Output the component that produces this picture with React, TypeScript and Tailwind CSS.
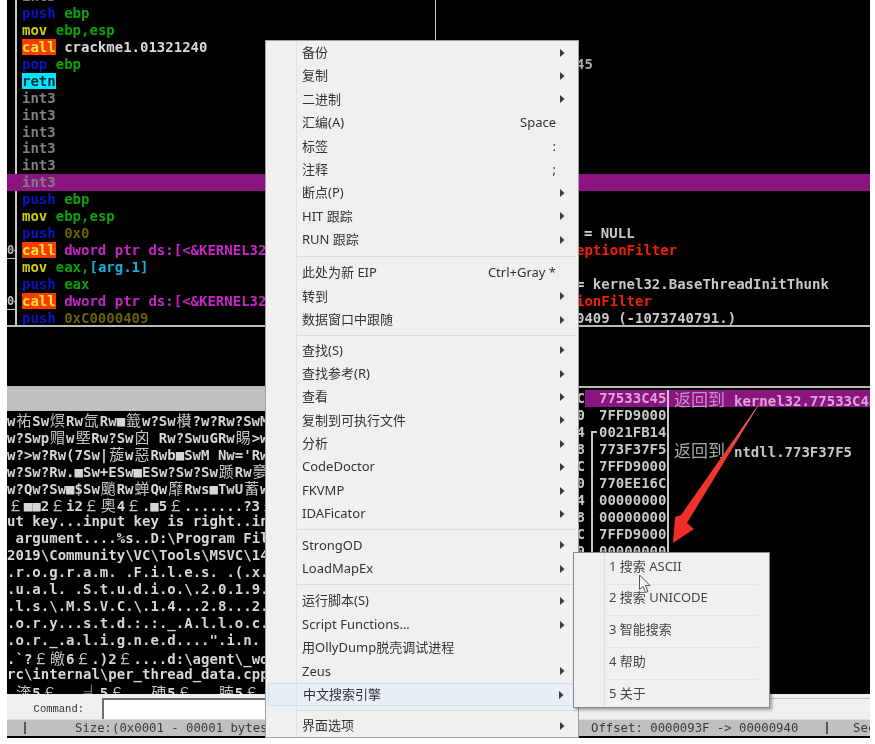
import React from "react";

const mono = "font-['DejaVu_Sans_Mono','Noto_Sans_CJK_SC',monospace]";

function Dump({ text }: { text: string }) {
  const parts = Array.from(text);
  return (
    <div className="h-[17px] leading-[17px] whitespace-pre text-[14px] font-bold text-[#d6d6d6]">
      {parts.map((c, i) =>
        /[\u2500-\u257f\u3000-\u9fff\uff00-\uffef]/.test(c) ? (
          <span key={i} className="inline-block w-[16.86px] text-center text-[15px] font-normal text-[#c4c4c4] font-['Noto_Sans_CJK_SC',sans-serif]">{c}</span>
        ) : (
          <span key={i}>{c}</span>
        )
      )}
    </div>
  );
}

const dumpRows = [
  "w祐Sw熐Rw氙Rw■籖w?Sw櫕?w?Rw?SwM",
  "w?Swp赗w塈Rw?Sw囟 Rw?SwuGRw睗>w`",
  "w?>w?Rw(7Sw|蔙w惡Rwb■SwM Nw='Rw",
  "w?Sw?Rw.■Sw+ESw■ESw?Sw?Sw踬Rw夣",
  "w?Qw?Sw■$Sw颵Rw蝉Qw靡Rws■TwU蓄w",
  "￡■■2￡i2￡奧4￡.■5￡.......?3￡?5￡",
  "ut key...input key is right..in",
  " argument....%s..D:\\Program Fil",
  "2019\\Community\\VC\\Tools\\MSVC\\14",
  ".r.o.g.r.a.m. .F.i.l.e.s. .(.x.",
  ".u.a.l. .S.t.u.d.i.o.\\.2.0.1.9.",
  ".l.s.\\.M.S.V.C.\\.1.4...2.8...2.",
  ".o.r.y...s.t.d.:.:._.A.l.l.o.c.",
  ".o.r._.a.l.i.g.n.e.d....\".i.n.",
  ".`?￡皦6￡.)2￡....d:\\agent\\_work\\",
  "rc\\internal\\per_thread_data.cpp",
  ".渀5￡...╡5￡...硨5￡...腩5￡...",
];

function Op({ k, children }: { k: string; children: React.ReactNode }) {
  if (k === "push") return <span className="text-[#0a12c4]">{children}</span>;
  if (k === "mov") return <span className="text-[#cccc10]">{children}</span>;
  if (k === "call") return <span className="bg-[#ff3a00] text-[#ffe830]">{children}</span>;
  if (k === "retn") return <span className="bg-[#00e4ff] text-[#022a34]">{children}</span>;
  return <span className="text-[#808080]">{children}</span>;
}

const G = ({ children }: { children: React.ReactNode }) => <span className="text-[#0ba30b]">{children}</span>;
const O = ({ children }: { children: React.ReactNode }) => <span className="text-[#6c6000]">{children}</span>;
const M = ({ children }: { children: React.ReactNode }) => <span className="text-[#c625c6]">{children}</span>;
const W = ({ children }: { children: React.ReactNode }) => <span className="text-[#d8d8d8]">{children}</span>;

function CodeRow({
  children,
  comment,
  mark,
  hl,
  tight,
}: {
  children: React.ReactNode;
  comment?: React.ReactNode;
  mark?: boolean;
  hl?: boolean;
  tight?: boolean;
}) {
  return (
    <div className={`flex h-[16.95px] leading-[17px] whitespace-pre ${hl ? "bg-[#8b1480]" : ""} ${tight ? "-mt-[12px]" : ""}`}>
      <div className={`relative w-[10px] shrink-0 border-r-2 ${hl ? "border-transparent" : "border-[#c8c8c8]"}`}>
        {mark && (
          <>
            <span className="absolute left-0 top-0 text-[12px] text-[#bbbbbb]">0</span>
            <span className="absolute left-[7px] right-0 top-[8px] h-px bg-[#c8c8c8]" />
            <span className="absolute left-0 right-0 bottom-0 h-px bg-[#c8c8c8]" />
          </>
        )}
      </div>
      <div className="w-[559px] shrink-0 overflow-hidden pl-[5px]">{children}</div>
      {comment}
    </div>
  );
}

const Arrow = () => (
  <svg width="8" height="8" viewBox="0 0 8 8" className="shrink-0"><path d="M2 0 L6.5 4 L2 8 Z" fill="#3a3a3a" /></svg>
);

type Item = { t?: string; s?: string; a?: boolean; sep?: string; hl?: boolean };
const items: Item[] = [
  { t: "备份", a: true },
  { t: "复制", a: true },
  { t: "二进制", a: true },
  { t: "汇编(A)", s: "Space" },
  { t: "标签", s: ":" },
  { t: "注释", s: ";" },
  { t: "断点(P)", a: true },
  { t: "HIT 跟踪", a: true },
  { t: "RUN 跟踪", a: true },
  { sep: "h-[9.9px]" },
  { t: "此处为新 EIP", s: "Ctrl+Gray *" },
  { t: "转到", a: true },
  { t: "数据窗口中跟随", a: true },
  { sep: "h-[7px]" },
  { t: "查找(S)", a: true },
  { t: "查找参考(R)", a: true },
  { t: "查看", a: true },
  { t: "复制到可执行文件", a: true },
  { t: "分析", a: true },
  { t: "CodeDoctor", a: true },
  { t: "FKVMP", a: true },
  { t: "IDAFicator", a: true },
  { sep: "h-[8px]" },
  { t: "StrongOD", a: true },
  { t: "LoadMapEx", a: true },
  { sep: "h-[9px]" },
  { t: "运行脚本(S)", a: true },
  { t: "Script Functions...", a: true },
  { t: "用OllyDump脱壳调试进程" },
  { t: "Zeus", a: true },
  { t: "中文搜索引擎", a: true, hl: true },
  { sep: "h-[8px]" },
  { t: "界面选项", a: true },
];

const stackRows = [
  ["0021FAEC", "77533C45", true],
  ["0021FAF0", "7FFD9000"],
  ["0021FAF4", "0021FB14"],
  ["0021FAF8", "773F37F5", false, "ntdll.773F37F5"],
  ["0021FAFC", "7FFD9000"],
  ["0021FB00", "770EE16C"],
  ["0021FB04", "00000000"],
  ["0021FB08", "00000000"],
  ["0021FB0C", "7FFD9000"],
  ["0021FB10", "00000000"],
] as [string, string, boolean?, string?][];

export default function App() {
  return (
    <div className={`relative h-[744px] w-[875px] overflow-hidden bg-white ${mono}`}>
      <div className="ml-[7px] flex h-[738px] w-[863px] flex-col overflow-hidden bg-black text-[14px] font-bold blur-[0.35px]">
        {/* code pane */}
        <div className="relative h-[327px] shrink-0 overflow-hidden border-b-2 border-[#b8b8b8]">
          <span className="absolute left-[428px] top-0 h-[40px] w-px bg-[#c8c8c8]" />
          <CodeRow tight><Op k="int">int3</Op></CodeRow>
          <CodeRow><Op k="push">push</Op> <G>ebp</G></CodeRow>
          <CodeRow><Op k="mov">mov</Op> <G>ebp,esp</G></CodeRow>
          <CodeRow><Op k="call">call</Op> <W>crackme1.01321240</W></CodeRow>
          <CodeRow comment={<span className="text-[#aaaaaa]">45</span>}><Op k="push">pop</Op> <G>ebp</G></CodeRow>
          <CodeRow><Op k="retn">retn</Op></CodeRow>
          <CodeRow><Op k="int">int3</Op></CodeRow>
          <CodeRow><Op k="int">int3</Op></CodeRow>
          <CodeRow><Op k="int">int3</Op></CodeRow>
          <CodeRow><Op k="int">int3</Op></CodeRow>
          <CodeRow><Op k="int">int3</Op></CodeRow>
          <CodeRow hl><Op k="int">int3</Op></CodeRow>
          <CodeRow><Op k="push">push</Op> <G>ebp</G></CodeRow>
          <CodeRow><Op k="mov">mov</Op> <G>ebp,esp</G></CodeRow>
          <CodeRow comment={<span className="pl-[8px] text-[#c8c8c8]">= NULL</span>}><Op k="push">push</Op> <O>0x0</O></CodeRow>
          <CodeRow mark comment={<span className="text-[#ee2200]">eptionFilter</span>}><Op k="call">call</Op> <M>dword ptr ds:[&lt;&amp;KERNEL32</M></CodeRow>
          <CodeRow><Op k="mov">mov</Op> <G>eax,</G><span className="text-[#12b0d8]">[arg.1]</span></CodeRow>
          <CodeRow comment={<span className="text-[#c8c8c8]">= kernel32.BaseThreadInitThunk</span>}><Op k="push">push</Op> <G>eax</G></CodeRow>
          <CodeRow mark comment={<span className="text-[#ee2200]">ionFilter</span>}><Op k="call">call</Op> <M>dword ptr ds:[&lt;&amp;KERNEL32</M></CodeRow>
          <CodeRow comment={<span className="text-[#c8c8c8]">0409 (-1073740791.)</span>}><Op k="push">push</Op> <O>0xC0000409</O></CodeRow>
        </div>
        {/* info pane */}
        <div className="h-[61px] shrink-0 border-b-2 border-[#b8b8b8]" />
        {/* lower panes */}
        <div className="flex h-[306px] shrink-0 overflow-hidden">
          <div className="flex w-[393px] shrink-0 flex-col overflow-hidden">
            <div className="h-[23px] shrink-0 bg-[#c0c0c0]" />
            {dumpRows.map((r, i) => (
              <Dump key={i} text={r} />
            ))}
          </div>
          <div className="relative flex-1 pt-[2px]">
            <span className="absolute left-[191px] top-[43px] h-[125px] w-[2px] bg-[#c8c8c8]" />
            <span className="absolute left-[191px] top-[43px] h-[2px] w-[6px] bg-[#c8c8c8]" />
            {stackRows.map(([addr, val, hl, cm]) => (
              <div key={addr} className="flex h-[17px] leading-[17px] whitespace-pre">
                <div className="w-[185px] shrink-0 text-right text-[#c8c8c8]">{addr}</div>
                <div className={`flex flex-1 ${hl ? "bg-[#8b1480] text-[#d8a8d8]" : "text-[#c8c8c8]"}`}>
                  <div className="w-[84px] shrink-0 border-r-2 border-[#c8c8c8] pl-[14px]">{val}</div>
                  {(hl || cm) && (
                    <div className="pl-[5px]">
                      <span className={`inline-block w-[60px] text-[17px] font-normal font-['Noto_Sans_CJK_SC',sans-serif] ${hl ? "text-[#c890c8]" : "text-[#a8a8a8]"}`}>返回到</span>
                      {hl ? "kernel32.77533C45" : cm}
                    </div>
                  )}
                </div>
              </div>
            ))}
          </div>
        </div>
        {/* command row */}
        <div className="flex h-[25px] shrink-0 items-end bg-[#f0f0f0] text-[10.5px] font-normal text-[#333333] font-['Liberation_Mono',monospace]">
          <div className="w-[95px] shrink-0 pb-[1px] pr-[18px] text-right">Command:</div>
          <div className="h-[21px] w-[476px] shrink-0 border-l-2 border-t-2 border-r-2 border-[#707070] bg-white" />
          <div className="h-[21px] flex-1 border-t border-[#c4c4c4]" />
        </div>
        {/* status bar */}
        <div className="flex h-[17px] shrink-0 items-center whitespace-pre border-t border-[#dddddd] bg-[#c0c0c0] text-[12.3px] font-normal text-[#3a3a3a]">
          <span className="ml-[17px] h-[12px] w-[2px] shrink-0 bg-[#555555]" />
          <span className="ml-[49px] w-[516px] shrink-0">Size:(0x0001 - 00001 bytes</span>
          <span className="w-[235px] shrink-0">Offset: 0000093F -&gt; 00000940</span>
          <span className="h-[12px] w-[2px] shrink-0 bg-[#555555]" />
          <span className="ml-[25px]">Sec</span>
        </div>
      </div>

      {/* context menu */}
      <div className="absolute left-[265px] top-[40px] flex h-[698px] w-[314px] flex-col border border-[#a0a0a0] bg-[#f0f0f0] pl-[2px] pr-[2px] text-[13px] text-[#333333] font-['Noto_Sans','Noto_Sans_CJK_SC',sans-serif] blur-[0.35px]">
        <span className="absolute bottom-0 left-[30px] top-0 w-px bg-[#e2e2e2]" />
        {items.map((it, i) =>
          it.sep ? (
            <div key={i} className={`flex shrink-0 items-center pl-[29px] ${it.sep}`}>
              <div className="h-px flex-1 bg-[#dcdcdc]" />
            </div>
          ) : (
            <div
              key={i}
              className={`flex h-[23.4px] shrink-0 items-center pl-[34px] pr-[10px] ${it.hl ? "rounded-[2px] border border-[#cfe0f2] bg-[#e8eff8]" : ""}`}
            >
              <span className="flex-1 whitespace-pre">{it.t}</span>
              {it.s && <span className="mr-[10px]">{it.s}</span>}
              {it.a && <Arrow />}
            </div>
          )
        )}
      </div>

      {/* sub menu */}
      <div className="absolute left-[573px] top-[552px] h-[156px] w-[197px] overflow-hidden border border-[#8a8a8a] bg-[#f0f0f0] text-[13px] text-[#444444] shadow-[2px_2px_3px_rgba(0,0,0,0.35)] font-['Noto_Sans','Noto_Sans_CJK_SC',sans-serif] blur-[0.35px]">
        <span className="absolute bottom-0 left-[30px] top-0 w-px bg-[#e0e0e0]" />
        {["1 搜索 ASCII", "2 搜索 UNICODE", "3 智能搜索", "4 帮助", "5 关于"].map((t, i) => (
          <div key={t} className={`ml-[31px] mr-[11px] flex h-[31.7px] items-center pb-[4px] pl-[4px] ${i < 4 ? "border-b border-[#e4e4e4]" : ""}`}>
            {t}
          </div>
        ))}
      </div>

      {/* annotation arrow */}
      <svg className="absolute left-[660px] top-[390px]" width="115" height="165" viewBox="0 0 115 165">
        <defs>
          <linearGradient id="redArrow" x1="1" y1="0" x2="0" y2="1">
            <stop offset="0" stopColor="#e8706a" />
            <stop offset="0.4" stopColor="#f03a30" />
            <stop offset="1" stopColor="#f02a22" />
          </linearGradient>
        </defs>
        <path d="M103 8 L21 125 L15 127 L13 153 L34 139 L27 133 Z" fill="url(#redArrow)" />
      </svg>

      {/* mouse cursor */}
      <svg className="absolute left-[638px] top-[574px]" width="14" height="20" viewBox="0 0 14 20">
        <path d="M1.5 1 V15.5 L5 12.5 L7.5 18.5 L10 17.5 L7.5 11.5 H12 Z" fill="#f4f4f4" stroke="#555555" strokeWidth="1" strokeLinejoin="round" />
      </svg>
    </div>
  );
}
